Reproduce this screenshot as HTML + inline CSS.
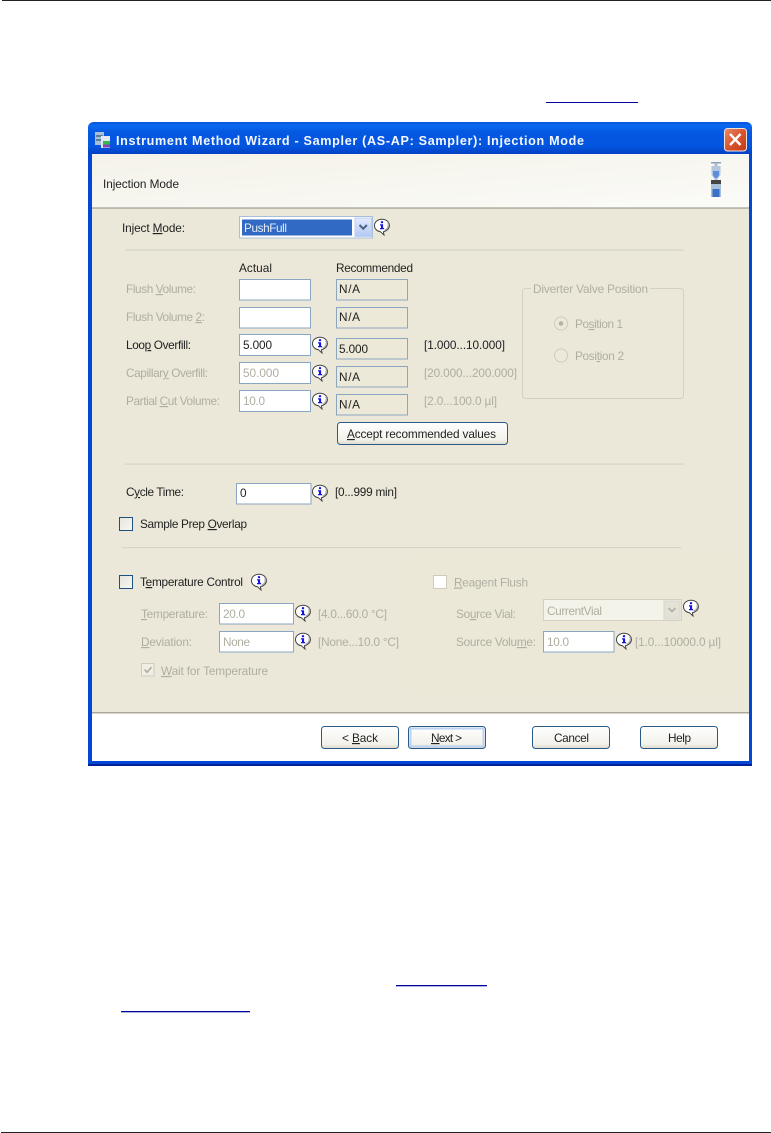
<!DOCTYPE html>
<html><head><meta charset="utf-8"><title>Instrument Method Wizard</title>
<style>
html,body{margin:0;padding:0;background:#fff;width:771px;height:1133px;overflow:hidden}
svg{display:block;position:absolute;left:0;top:0}
text{font-family:"Liberation Sans",sans-serif;font-size:11.8px;fill:#222}
.d{fill:#b0aea1}
.t{font-weight:bold;font-size:12.6px;fill:#f4f7ff}
.i{fill:#fff;stroke:#8ba6c0;stroke-width:1}
.r{fill:#ece9d8;stroke:#8ba6c0;stroke-width:1}
.b{fill:url(#btn);stroke:#2a5a88;stroke-width:1}
#w{filter:blur(.36px)}
</style></head><body>
<svg width="771" height="1133" viewBox="0 0 771 1133" xmlns="http://www.w3.org/2000/svg">
<defs>
<linearGradient id="tb" x1="0" y1="0" x2="0" y2="1">
<stop offset="0" stop-color="#0853d8"/><stop offset=".12" stop-color="#0a6af0"/><stop offset=".3" stop-color="#0558e2"/><stop offset=".75" stop-color="#0355e0"/><stop offset="1" stop-color="#0340c4"/></linearGradient>
<linearGradient id="hd" x1="0" y1="0" x2="1" y2="1">
<stop offset="0" stop-color="#f4f2e8"/><stop offset=".6" stop-color="#f8f7f1"/><stop offset="1" stop-color="#fbfbf8"/></linearGradient>
<linearGradient id="btn" x1="0" y1="0" x2="0" y2="1">
<stop offset="0" stop-color="#fff"/><stop offset=".8" stop-color="#f2f1ea"/><stop offset="1" stop-color="#dcd8cb"/></linearGradient>
<linearGradient id="cl" x1="0" y1="0" x2="1" y2="1">
<stop offset="0" stop-color="#e88a6c"/><stop offset=".5" stop-color="#d9552e"/><stop offset="1" stop-color="#c13a14"/></linearGradient>
<linearGradient id="cb" x1="0" y1="0" x2="0" y2="1">
<stop offset="0" stop-color="#e2eafe"/><stop offset="1" stop-color="#b4c8f4"/></linearGradient>
<linearGradient id="ck" x1="0" y1="0" x2="1" y2="1">
<stop offset="0" stop-color="#e6e4da"/><stop offset="1" stop-color="#f8f8f4"/></linearGradient>
<symbol id="info" viewBox="0 0 18 18" width="18" height="18">
<path d="M9 1.200C4.800 1.200 1.500 3.900 1.500 7.600c0 3.300 2.700 5.800 6 6.200l3.500 3.200-.6-3.300c3.400-.7 6-3.100 6-6.100C16.400 3.900 13.200 1.200 9 1.200z" fill="#fff" stroke="#444" stroke-width="1"/>
<path d="M14.800 4.500c1.300 2.800.3 6.200-3.200 7.700" fill="none" stroke="#aaa" stroke-width="1.200"/>
<rect x="7.900" y="3.200" width="2.200" height="2" fill="#1414e0"/>
<path d="M7 6.200h3.100v3.800h1v1.300H7V10h1V7.500H7z" fill="#1414e0"/>
</symbol>
</defs>

<rect x="2" y="0" width="769" height="1" fill="#222"/>
<rect x="1" y="1132" width="770" height="1" fill="#222"/>
<rect x="546" y="102" width="92" height="1" fill="#00009c"/>
<rect x="396" y="985" width="91" height="1.300" fill="#00009c"/>
<rect x="121" y="1011" width="129" height="1.300" fill="#00009c"/>

<g id="w">
<path d="M88 766V129q0-7 7-7H745q7 0 7 7V766z" fill="#0347d6"/>
<path d="M88 764h664v2H88z" fill="#02209a"/>
<path d="M88 128q0-6 7-6H745q7 0 7 6v26H88z" fill="url(#tb)"/>
<rect x="92" y="154" width="657" height="607" fill="#fff"/>
<rect x="92" y="154" width="657" height="54" fill="url(#hd)"/>
<rect x="92" y="207.500" width="657" height="1.200" fill="#8f8d80"/>
<rect x="92" y="208.500" width="657" height="504" fill="#ebe8d9"/>
<rect x="405" y="555" width="344" height="137" fill="#ebe8d8"/>
<rect x="92" y="712" width="657" height="1.500" fill="#aca899"/>

<rect x="95" y="132" width="9" height="13" fill="#a9bfd6"/>
<rect x="96" y="135" width="7" height="2" fill="#5d7da0"/>
<rect x="96" y="139" width="7" height="2" fill="#5d7da0"/>
<rect x="101" y="136" width="9" height="12" fill="#dfe7ef"/>
<rect x="103" y="141" width="7" height="3.500" fill="#38b84a"/>
<rect x="103" y="144.500" width="7" height="3" fill="#8a3fc0"/>
<text class="t" x="116" y="145" textLength="468">Instrument Method Wizard - Sampler (AS-AP: Sampler): Injection Mode</text>

<rect x="724.500" y="128.500" width="22" height="22.500" rx="3" fill="url(#cl)" stroke="#f3e4dc"/>
<path d="M730 134l10.500 11M740.500 134L730 145" stroke="#fff" stroke-width="2.400" fill="none"/>

<text x="103" y="188" textLength="76">Injection Mode</text>

<rect x="711" y="162" width="10" height="1.500" fill="#8aa0b8"/>
<rect x="714.500" y="163" width="3" height="3" fill="#a9bbce"/>
<path d="M711.500 166h9v9l-3 4v3h-3v-3l-3-4z" fill="#b2c6de"/>
<path d="M713 171h6v4l-2 3h-2l-2-3z" fill="#5d8cdc"/>
<rect x="711" y="180" width="10" height="4" fill="#444"/>
<rect x="711" y="184" width="10" height="13" fill="#a9c0dc"/>
<rect x="712.500" y="189" width="7" height="8" fill="#3c70c8"/>

<text x="122" y="232" textLength="63">Inject <tspan text-decoration="underline">M</tspan>ode:</text>
<rect x="239.500" y="216.500" width="133" height="21.500" fill="#fff" stroke="#a9bed8"/>
<rect x="242" y="219.500" width="110" height="16" fill="#316ac5"/>
<text x="244" y="232" textLength="43" style="fill:#e6ecf6">PushFull</text>
<rect x="355" y="218" width="16.500" height="18.500" fill="url(#cb)" stroke="#bcd0f0"/>
<path d="M359.500 225l3.700 3.700 3.700-3.700" fill="none" stroke="#4d6185" stroke-width="2"/>
<use href="#info" x="373" y="218"/>
<rect x="125" y="249.500" width="559" height="1.200" fill="#d6d4c8"/>

<text x="239" y="272" textLength="33">Actual</text>
<text x="336" y="272" textLength="77">Recommended</text>

<text class="d" x="126" y="293" textLength="70">Flush <tspan text-decoration="underline">V</tspan>olume:</text>
<text class="d" x="126" y="321" textLength="79">Flush Volume <tspan text-decoration="underline">2</tspan>:</text>
<text x="126" y="349" textLength="65">Loo<tspan text-decoration="underline">p</tspan> Overfill:</text>
<text class="d" x="126" y="377" textLength="82">Capillar<tspan text-decoration="underline">y</tspan> Overfill:</text>
<text class="d" x="126" y="405" textLength="94">Partial <tspan text-decoration="underline">C</tspan>ut Volume:</text>

<rect class="i" x="239.500" y="279.500" width="71" height="20.500"/>
<rect class="i" x="239.500" y="307.500" width="71" height="20.500"/>
<rect class="i" x="239.500" y="334.500" width="71" height="21"/>
<rect class="i" x="239.500" y="362.500" width="71" height="21"/>
<rect class="i" x="239.500" y="390.500" width="71" height="21"/>
<text x="243" y="349" textLength="29">5.000</text>
<text class="d" x="243" y="377" textLength="36">50.000</text>
<text class="d" x="243" y="405" textLength="22">10.0</text>
<use href="#info" x="311" y="336"/>
<use href="#info" x="311" y="364"/>
<use href="#info" x="311" y="392"/>

<rect class="r" x="336.500" y="279.500" width="71" height="20.500"/>
<rect class="r" x="336.500" y="307.500" width="71" height="20.500"/>
<rect class="r" x="336.500" y="338.500" width="71" height="20.500"/>
<rect class="r" x="336.500" y="366.500" width="71" height="20.500"/>
<rect class="r" x="336.500" y="394.500" width="71" height="20.500"/>
<text x="339" y="293" textLength="21">N/A</text>
<text x="339" y="321" textLength="21">N/A</text>
<text x="339" y="353" textLength="29">5.000</text>
<text x="339" y="381" textLength="21">N/A</text>
<text x="339" y="408.500" textLength="21">N/A</text>

<text x="424" y="349" textLength="81">[1.000...10.000]</text>
<text class="d" x="424" y="377" textLength="93">[20.000...200.000]</text>
<text class="d" x="424" y="405" textLength="73">[2.0...100.0 µl]</text>

<rect class="b" x="337.500" y="422.500" width="170" height="22" rx="3"/>
<text x="347" y="438" textLength="149"><tspan text-decoration="underline">A</tspan>ccept recommended values</text>

<rect x="522.500" y="288.500" width="161" height="110" rx="3" fill="none" stroke="#d3d0c2"/>
<rect x="531" y="284" width="119" height="10" fill="#ebe8d9"/>
<text class="d" x="533" y="293" textLength="115">Diverter Valve Position</text>
<circle cx="561" cy="323.500" r="6.500" fill="#ece9dc" stroke="#cfccbd"/>
<circle cx="561" cy="323.500" r="2.300" fill="#b4b2a4"/>
<circle cx="561" cy="355.500" r="6.500" fill="#ece9dc" stroke="#cfccbd"/>
<text class="d" x="575" y="328" textLength="48">Po<tspan text-decoration="underline">s</tspan>ition 1</text>
<text class="d" x="575" y="360" textLength="49">Posi<tspan text-decoration="underline">t</tspan>ion 2</text>

<rect x="125" y="463.500" width="559" height="1.200" fill="#d6d4c8"/>

<text x="126" y="496" textLength="58">C<tspan text-decoration="underline">y</tspan>cle Time:</text>
<rect class="i" x="236.500" y="483.500" width="74.500" height="20.500"/>
<text x="240" y="497" textLength="7">0</text>
<use href="#info" x="311" y="484"/>
<text x="335" y="496" textLength="62">[0...999 min]</text>

<rect x="119.500" y="517.500" width="13" height="13" fill="url(#ck)" stroke="#1c5180"/>
<text x="140" y="528" textLength="107">Sample Prep <tspan text-decoration="underline">O</tspan>verlap</text>

<rect x="122" y="547" width="559" height="1.200" fill="#d6d4c8"/>

<rect x="119.500" y="575.500" width="13" height="13" fill="url(#ck)" stroke="#1c5180"/>
<text x="140" y="586" textLength="103">T<tspan text-decoration="underline">e</tspan>mperature Control</text>
<use href="#info" x="250" y="573"/>

<text class="d" x="141" y="618" textLength="67"><tspan text-decoration="underline">T</tspan>emperature:</text>
<rect class="i" x="219.500" y="603.500" width="74" height="20.500"/>
<text class="d" x="223" y="618" textLength="22">20.0</text>
<use href="#info" x="294" y="604"/>
<text class="d" x="318" y="618" textLength="69">[4.0...60.0 °C]</text>

<text class="d" x="141" y="646" textLength="51"><tspan text-decoration="underline">D</tspan>eviation:</text>
<rect class="i" x="219.500" y="631.500" width="74" height="20.500"/>
<text class="d" x="223" y="646" textLength="27">None</text>
<use href="#info" x="294" y="632"/>
<text class="d" x="318" y="646" textLength="81">[None...10.0 °C]</text>

<rect x="141.500" y="663.500" width="12.500" height="12.500" fill="#f0eee4" stroke="#cfccbd"/>
<path d="M144.500 669.500l2.500 2.700 4.500-5" fill="none" stroke="#aeac9f" stroke-width="1.600"/>
<text class="d" x="161" y="675" textLength="107"><tspan text-decoration="underline">W</tspan>ait for Temperature</text>

<rect x="433.500" y="575.500" width="13" height="13" fill="#fff" stroke="#cfccbd"/>
<text class="d" x="454" y="586.500" textLength="74"><tspan text-decoration="underline">R</tspan>eagent Flush</text>
<text class="d" x="456" y="618" textLength="60">So<tspan text-decoration="underline">u</tspan>rce Vial:</text>
<rect x="543.500" y="599.500" width="138" height="21" fill="#f4f3ea" stroke="#d3d0c2"/>
<rect x="664" y="601" width="16" height="18" fill="#e4e2d6" stroke="#d8d6ca"/>
<path d="M668.500 608l3.500 3.500 3.500-3.500" fill="none" stroke="#b5b3a7" stroke-width="1.800"/>
<text class="d" x="547" y="615" textLength="55">CurrentVial</text>
<use href="#info" x="682" y="599"/>
<text class="d" x="456" y="646" textLength="80">Source Volu<tspan text-decoration="underline">m</tspan>e:</text>
<rect class="i" x="543.500" y="631.500" width="70.500" height="20.500"/>
<text class="d" x="547" y="646" textLength="22">10.0</text>
<use href="#info" x="615" y="632"/>
<text class="d" x="635" y="646" textLength="86">[1.0...10000.0 µl]</text>

<rect class="b" x="321.500" y="726.500" width="77" height="22" rx="3"/>
<text x="342" y="742" textLength="36">&lt; <tspan text-decoration="underline">B</tspan>ack</text>
<rect class="b" x="408.500" y="726.500" width="77" height="22" rx="3"/>
<rect x="410.500" y="728.500" width="73" height="18" rx="1" fill="none" stroke="#bcd2f0" stroke-width="2"/>
<text x="431" y="742" textLength="31"><tspan text-decoration="underline">N</tspan>ext &gt;</text>
<rect class="b" x="532.500" y="726.500" width="77" height="22" rx="3"/>
<text x="554" y="742" textLength="35">Cancel</text>
<rect class="b" x="640.500" y="726.500" width="77" height="22" rx="3"/>
<text x="668" y="742" textLength="23">Help</text>
</g>
</svg>
</body></html>
